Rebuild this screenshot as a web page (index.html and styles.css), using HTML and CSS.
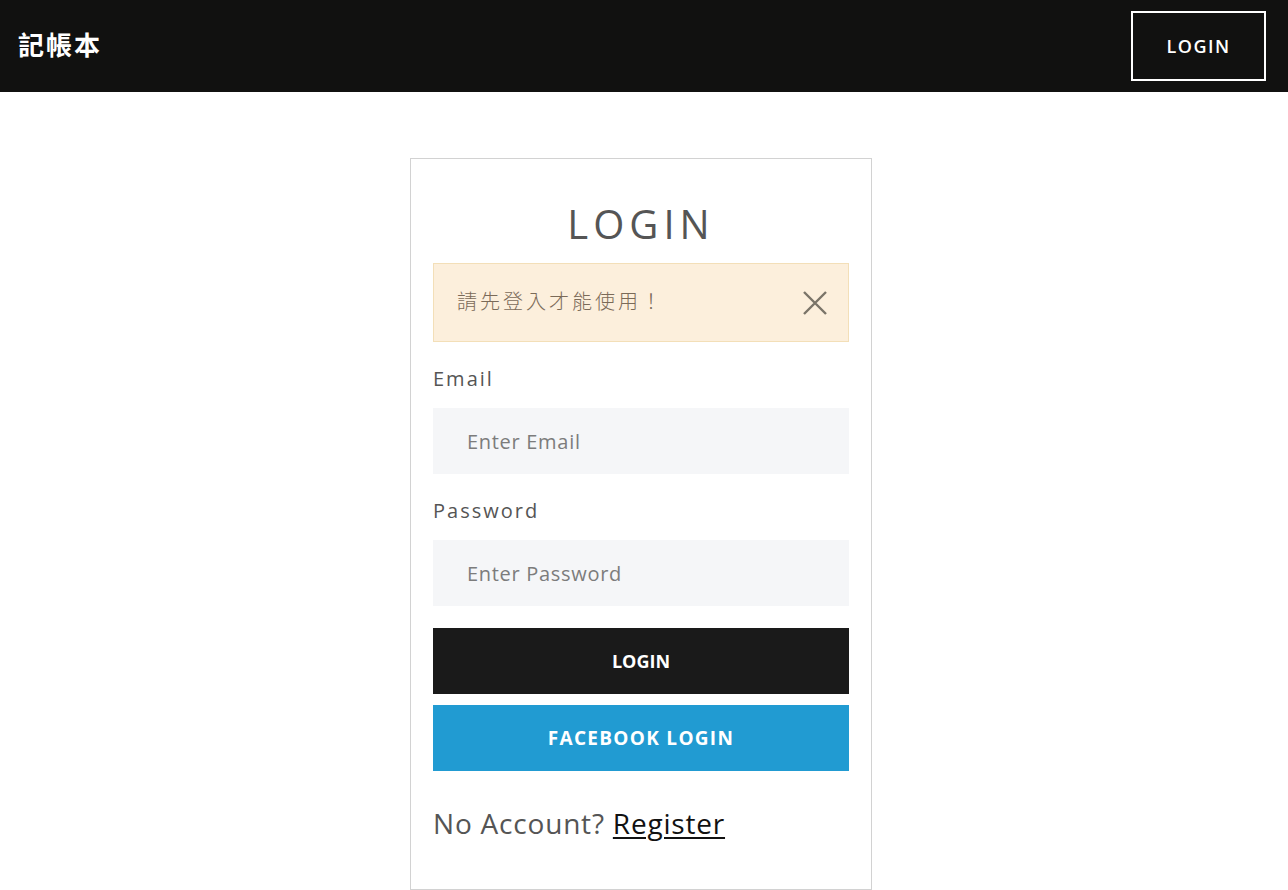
FILE: index.html
```html
<!DOCTYPE html>
<html lang="zh-Hant">
<head>
<meta charset="utf-8">
<title>記帳本</title>
<link rel="stylesheet" href="styles.css">
</head>
<body>
<header class="navbar">
  <a class="brand" href="#">記帳本</a>
  <a class="nav-login" href="#">LOGIN</a>
</header>
<main class="main">
  <section class="card">
    <h1 class="title">LOGIN</h1>
    <div class="alert">
      <span class="alert-text">請先登入才能使用！</span>
      <button class="alert-close" type="button" aria-label="close">
        <svg width="24" height="24" viewBox="0 0 24 24"><path d="M1 1 L23 23 M23 1 L1 23" stroke="#7a7468" stroke-width="2.4" fill="none"/></svg>
      </button>
    </div>
    <form class="form">
      <label class="label" for="email">Email</label>
      <input class="input" id="email" type="text" placeholder="Enter Email">
      <label class="label" for="password">Password</label>
      <input class="input" id="password" type="password" placeholder="Enter Password">
      <button class="btn btn-dark" type="button">LOGIN</button>
      <button class="btn btn-fb" type="button">FACEBOOK LOGIN</button>
    </form>
    <p class="register">No Account? <a href="#">Register</a></p>
  </section>
</main>
</body>
</html>
```
FILE: styles.css
```css
* { box-sizing: border-box; }
html, body { margin: 0; padding: 0; }
body {
  font-family: "Open Sans", "Noto Sans CJK TC", sans-serif;
  background: #fff;
  color: #555;
}
.navbar {
  height: 92px;
  background: #111110;
  display: flex;
  align-items: center;
  justify-content: space-between;
  padding: 0 22px 0 18px;
}
.brand {
  color: #fff;
  text-decoration: none;
  font-family: "Noto Sans CJK TC", sans-serif;
  font-weight: 700;
  font-size: 26px;
  letter-spacing: 2px;
  margin-top: -6px;
}
.nav-login {
  width: 135px;
  height: 70px;
  border: 2px solid #fff;
  color: #fff;
  text-decoration: none;
  font-size: 18px;
  font-weight: 600;
  letter-spacing: 1.5px;
  display: flex;
  align-items: center;
  justify-content: center;
}
.main {
  display: flex;
  justify-content: center;
  padding-top: 66px;
  padding-right: 6px;
}
.card {
  width: 462px;
  border: 1px solid #d2d2d2;
  padding: 38px 22px 46px;
}
.title {
  margin: 0 0 12px;
  text-align: center;
  font-weight: 400;
  font-size: 40px;
  letter-spacing: 5px;
  line-height: 54px;
  color: #555;
}
.alert {
  height: 79px;
  background: #fcefdc;
  border: 1px solid #f3dfb8;
  display: flex;
  align-items: center;
  justify-content: space-between;
  padding: 0 21px 0 23px;
}
.alert-text {
  font-family: "Noto Sans CJK TC", sans-serif;
  font-weight: 300;
  font-size: 20px;
  letter-spacing: 3px;
  color: #7a6a58;
  margin-top: -4px;
}
.alert-close {
  border: 0;
  background: none;
  padding: 0;
  width: 24px;
  height: 24px;
  display: flex;
}
.form {
  display: flex;
  flex-direction: column;
}
.label {
  margin-top: 22px;
  margin-bottom: 14px;
  font-size: 20px;
  letter-spacing: 2px;
  line-height: 30px;
  color: #555;
}
.input {
  height: 66px;
  border: 0;
  background: #f5f6f8;
  padding: 0 34px;
  font-family: inherit;
  font-size: 20px;
  letter-spacing: 0.7px;
  color: #555;
  outline: none;
}
.input::placeholder { color: #7c7c7c; }
.btn {
  height: 66px;
  border: 0;
  font-family: inherit;
  color: #fff;
  font-weight: 700;
  cursor: pointer;
}
.btn-dark {
  margin-top: 22px;
  background: #1a1a1a;
  font-size: 18px;
}
.btn-fb {
  margin-top: 11px;
  background: #219bd2;
  font-size: 19px;
  letter-spacing: 1.3px;
}
.register {
  margin: 32px 0 0;
  font-size: 28px;
  letter-spacing: 0.8px;
  line-height: 40px;
  color: #555;
}
.register a {
  color: #111;
  text-decoration: underline;
  text-underline-offset: 3px;
  text-decoration-thickness: 2px;
}
```
